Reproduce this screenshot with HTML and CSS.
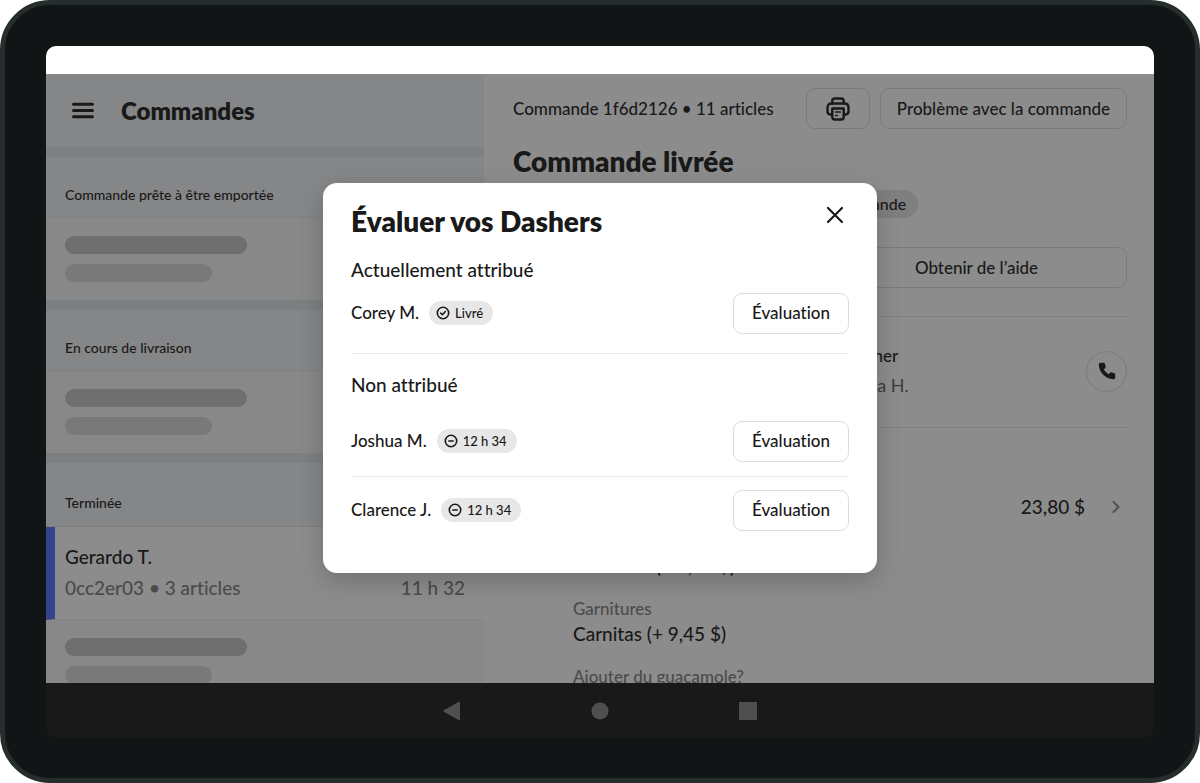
FILE: index.html
```html
<!DOCTYPE html>
<html lang="fr">
<head>
<meta charset="utf-8">
<meta name="viewport" content="width=device-width, initial-scale=1">
<title>Commandes</title>
<link rel="stylesheet" href="styles.css">
</head>
<body>
<div class="device">
  <div class="screen">
    <div class="status-bar"></div>
    <div class="app">
      <aside class="sidebar">
        <header class="sidebar-header">
          <button class="icon-button" type="button" aria-label="Menu">
            <svg width="22" height="17" viewBox="0 0 22 17" fill="none" stroke="currentColor" stroke-width="3" stroke-linecap="round"><path d="M1.500 2.300h19M1.500 8.500h19M1.500 14.700h19"/></svg>
          </button>
          <h1 class="sidebar-title">Commandes</h1>
        </header>
        <section class="group">
          <h2 class="group-title">Commande prête à être emportée</h2>
          <div class="placeholder"><span class="bar"></span><span class="bar bar-short"></span></div>
        </section>
        <section class="group">
          <h2 class="group-title">En cours de livraison</h2>
          <div class="placeholder"><span class="bar"></span><span class="bar bar-short"></span></div>
        </section>
        <section class="group">
          <h2 class="group-title group-title-done">Terminée</h2>
          <a class="order" href="#order">
            <span class="order-name">Gerardo T.</span>
            <span class="order-meta"><span>0cc2er03 • 3 articles</span><span>11 h 32</span></span>
          </a>
          <div class="placeholder"><span class="bar"></span><span class="bar bar-short"></span></div>
        </section>
      </aside>
      <main class="detail" id="order">
        <div class="toolbar">
          <p class="order-ref">Commande 1f6d2126 • 11 articles</p>
          <button class="button button-dim button-print" type="button" aria-label="Imprimer">
            <svg width="24" height="24" viewBox="0 0 24 24" fill="none" stroke="currentColor" stroke-width="2.400" stroke-linejoin="round" stroke-linecap="round"><path d="M6.300 6.500V4q0-2.500 2.500-2.500h6.400q2.500 0 2.500 2.500v2.500"/><path d="M6 17.500H4.500q-3-.2-3-3v-4q0-4 4-4h13q4 0 4 4v4q0 2.800-3 3H18"/><path d="M6.300 11.500h11.400V20q0 2.500-2.500 2.500H8.800q-2.500 0-2.500-2.500z"/><path d="M9.800 15h4.400M9.800 18.500h1.600" stroke-width="1.700"/></svg>
          </button>
          <button class="button button-dim" type="button">Problème avec la commande</button>
        </div>
        <h2 class="detail-title">Commande livrée</h2>
        <div class="tag">Détails de la commande</div>
        <div class="actions">
          <button class="button button-dim" type="button">Modifier</button>
          <button class="button button-dim" type="button">Obtenir de l’aide</button>
        </div>
        <div class="people">
          <div class="person"><span class="person-role">Client</span><span class="person-name">Gerardo T.</span></div>
          <div class="person"><span class="person-role">Dasher</span><span class="person-name">Anna H.</span></div>
          <button class="call" type="button" aria-label="Appeler">
            <svg width="18" height="18" viewBox="0 0 18 18" fill="currentColor"><path d="M2.500.8h3c.8 0 1.300.5 1.500 1.300l.6 2.400c.2.700 0 1.300-.5 1.700L5.800 7.300c1.100 2.200 2.700 3.800 4.900 4.900l1.100-1.300c.4-.5 1-.7 1.700-.5l2.400.6c.8.200 1.300.7 1.300 1.500v3c0 1-.7 1.700-1.700 1.700C7.500 17 1 10.500.8 2.500.8 1.500 1.500.8 2.500.8z"/></svg>
          </button>
        </div>
        <div class="item">
          <span class="item-name">Burrito</span>
          <span class="item-price">23,80 $</span>
          <svg class="chevron" width="8" height="12" viewBox="0 0 8 12" fill="none" stroke="currentColor" stroke-width="2" stroke-linecap="round" stroke-linejoin="round"><path d="M1.500 1l5 5-5 5"/></svg>
        </div>
        <dl class="options">
          <dt>Viande</dt><dd>Barbacoa (+ 9,45 $)</dd>
          <dt>Garnitures</dt><dd>Carnitas (+ 9,45 $)</dd>
          <dt>Ajouter du guacamole?</dt>
        </dl>
      </main>
      <div class="overlay">
        <div class="dialog" role="dialog" aria-modal="true" aria-labelledby="dialog-title">
          <header class="dialog-header">
            <h2 class="dialog-title" id="dialog-title">Évaluer vos Dashers</h2>
            <button class="icon-button close" type="button" aria-label="Fermer">
              <svg width="18" height="18" viewBox="0 0 18 18" fill="none" stroke="currentColor" stroke-width="2.200" stroke-linecap="round"><path d="M2 2l14 14M16 2L2 16"/></svg>
            </button>
          </header>
          <section class="assigned">
            <h3 class="dialog-subtitle">Actuellement attribué</h3>
            <div class="dasher">
              <span class="dasher-name">Corey M.</span>
              <span class="badge"><svg width="14" height="14" viewBox="0 0 14 14" fill="none" stroke="currentColor" stroke-width="1.600" stroke-linecap="round" stroke-linejoin="round"><circle cx="7" cy="7" r="5.700"/><path d="M4.700 7.200l1.700 1.500 3-3.200"/></svg>Livré</span>
              <button class="button" type="button">Évaluation</button>
            </div>
          </section>
          <section class="unassigned">
            <h3 class="dialog-subtitle">Non attribué</h3>
            <div class="dasher">
              <span class="dasher-name">Joshua M.</span>
              <span class="badge"><svg width="14" height="14" viewBox="0 0 14 14" fill="none" stroke="currentColor" stroke-width="1.600" stroke-linecap="round"><circle cx="7" cy="7" r="5.700"/><path d="M4.800 7h4.400"/></svg>12 h 34</span>
              <button class="button" type="button">Évaluation</button>
            </div>
            <div class="dasher">
              <span class="dasher-name">Clarence J.</span>
              <span class="badge"><svg width="14" height="14" viewBox="0 0 14 14" fill="none" stroke="currentColor" stroke-width="1.600" stroke-linecap="round"><circle cx="7" cy="7" r="5.700"/><path d="M4.800 7h4.400"/></svg>12 h 34</span>
              <button class="button" type="button">Évaluation</button>
            </div>
          </section>
        </div>
      </div>
    </div>
    <nav class="system-nav" aria-label="Système">
      <button class="icon-button" type="button" aria-label="Retour"><svg width="18" height="20" viewBox="0 0 18 20" fill="currentColor"><path d="M.8 9.200 15.800.8q1.200-.5 1.200.6v17.200q0 1.100-1.200.6L.8 10.800q-.8-.8 0-1.600z"/></svg></button>
      <button class="icon-button" type="button" aria-label="Accueil"><svg width="18" height="18" viewBox="0 0 18 18" fill="currentColor"><circle cx="9" cy="9" r="8.500"/></svg></button>
      <button class="icon-button" type="button" aria-label="Applications récentes"><svg width="18" height="18" viewBox="0 0 18 18" fill="currentColor"><rect width="18" height="18" rx="1"/></svg></button>
    </nav>
  </div>
</div>
</body>
</html>
```
FILE: styles.css
```css
* { box-sizing: border-box; }

body {
  margin: 0;
  background: #fff;
  color: #191919;
  font-family: Lato, "Open Sans", sans-serif;
  font-size: 16px;
  font-weight: 500;
  font-variant-ligatures: none;
}

h1, h2, h3, p, dl, dd { margin: 0; }

button {
  font: inherit;
  font-variant-ligatures: none;
  color: inherit;
  cursor: pointer;
}

svg { display: block; flex: none; }

.icon-button {
  display: flex;
  align-items: center;
  justify-content: center;
  padding: 0;
  border: 0;
  background: none;
}

.button {
  display: flex;
  align-items: center;
  justify-content: center;
  min-width: 116px;
  height: 41px;
  padding: 0 16px;
  border: 1px solid #dcdcdc;
  border-radius: 9px;
  background: none;
  font-size: 17px;
  line-height: 24px;
  white-space: nowrap;
}

.button-dim { border-color: #7b7b7b; }

/* Tablet frame */
.device {
  display: flex;
  height: 100vh;
  padding: 41px 41px 40px;
  border: 5px solid #252e2d;
  border-radius: 50px;
  background: #111516;
}

.screen {
  display: flex;
  flex: 1;
  flex-direction: column;
  min-width: 0;
  border-radius: 10px;
  background: #191919;
  overflow: hidden;
}

.status-bar { flex: none; height: 28px; background: #fff; }

.app {
  position: relative;
  display: grid;
  grid-template-columns: 438fr 670fr;
  flex: 1;
  min-height: 0;
  background: #8c8c8c;
  overflow: hidden;
}

/* Order list */
.sidebar { min-width: 0; background: #888; }

.sidebar-header {
  display: flex;
  align-items: center;
  gap: 27px;
  height: 73px;
  padding-left: 26px;
  background: #858688;
}

.sidebar-title { font-size: 24px; font-weight: 800; line-height: 32px; }

.group { border-top: 10px solid #7c8082; }

.group-title {
  padding: 28px 19px 12px;
  background: #858688;
  border-bottom: 1px solid #7f8082;
  font-size: 14px;
  font-weight: 500;
  line-height: 20px;
}

.group-title-done { padding: 30px 19px 13px; }

.placeholder {
  display: flex;
  flex-direction: column;
  gap: 10px;
  padding: 18px 19px;
}

.bar { width: 182px; height: 18px; border-radius: 9px; background: #6f6f6f; }
.bar-short { width: 147px; background: #797979; }

.order {
  display: block;
  padding: 15px 19px 15px 10px;
  border-bottom: 1px solid #838383;
  border-left: 9px solid #33448c;
  background: #8c8c8c;
  color: inherit;
  font-size: 19px;
  line-height: 32px;
  text-decoration: none;
}

.order-name { display: block; line-height: 30px; }

.order-meta {
  display: flex;
  justify-content: space-between;
  color: #4b4b4b;
}

/* Order detail */
.detail { min-width: 0; padding: 14px 27px 0 29px; }

.toolbar { display: flex; align-items: center; gap: 10px; }
.order-ref { flex: 1; font-size: 17px; line-height: 24px; white-space: nowrap; }
.button-print { min-width: 64px; padding: 0; }

.detail-title {
  margin-top: 16px;
  font-size: 28px;
  font-weight: 800;
  line-height: 32px;
}

.tag {
  width: 66%;
  margin-top: 13px;
  padding: 2px 12px;
  border-radius: 14px;
  background: #7f7f7f;
  font-size: 16px;
  line-height: 24px;
  text-align: right;
}

.actions {
  display: grid;
  grid-template-columns: 1fr 1fr;
  gap: 12px;
  padding: 29px 0 28px;
  border-bottom: 1px solid #808080;
}

.people {
  display: grid;
  grid-template-columns: 332px 1fr auto;
  align-items: center;
  height: 111px;
  padding-bottom: 2px;
  border-bottom: 1px solid #808080;
}

.person { display: flex; flex-direction: column; }
.person-role { font-size: 17px; line-height: 28px; }
.person-name { color: #3c3c3c; font-size: 18px; font-weight: 400; line-height: 30px; }

.call {
  display: flex;
  align-items: center;
  justify-content: center;
  width: 41px;
  height: 41px;
  padding: 0;
  border: 1px solid #7b7b7b;
  border-radius: 50%;
  background: none;
}

.item {
  display: flex;
  align-items: center;
  margin-top: 64px;
  padding-right: 7px;
  font-size: 19px;
  line-height: 30px;
}

.item-name { flex: 1; }
.chevron { margin-left: 27px; color: #505050; }

.options { padding: 7px 0 0 60px; }
.options dt { color: #4b4b4b; font-size: 17px; line-height: 24px; }
.options dd { padding-bottom: 18px; font-size: 19px; line-height: 26px; }

/* Rating dialog */
.overlay {
  position: absolute;
  inset: 0;
  display: grid;
  place-items: center;
  padding-bottom: 2px;
}

.dialog {
  width: 50%;
  padding: 18px 28px 42px;
  border-radius: 14px;
  background: #fff;
  box-shadow: 0 8px 24px rgba(0, 0, 0, 0.2);
}

.dialog-header {
  display: flex;
  align-items: flex-start;
  justify-content: space-between;
}

.dialog-title {
  padding-top: 6px;
  font-size: 28px;
  font-weight: 800;
  line-height: 28px;
}

.close { width: 28px; height: 28px; }

.dialog-subtitle { font-size: 19px; font-weight: 500; line-height: 24px; }

.assigned {
  padding: 23px 0 19px;
  border-bottom: 1px solid #e7e7e7;
}

.assigned .dialog-subtitle { margin-bottom: 11px; }
.unassigned .dialog-subtitle { margin: 19px 0 24px; }

.dasher { display: flex; align-items: center; gap: 10px; }
.dasher .button { margin-left: auto; }
.dasher-name { font-size: 17px; line-height: 24px; }

.dasher + .dasher {
  margin-top: 14px;
  padding-top: 13px;
  border-top: 1px solid #e7e7e7;
}

.badge {
  display: inline-flex;
  align-items: center;
  gap: 5px;
  padding: 2px 10px 2px 7px;
  border-radius: 12px;
  background: #e7e7e7;
  font-size: 13px;
  line-height: 20px;
}

/* System navigation */
.system-nav {
  display: flex;
  flex: none;
  align-items: center;
  justify-content: center;
  gap: 130px;
  height: 55px;
  color: #4f4f4f;
}
```
